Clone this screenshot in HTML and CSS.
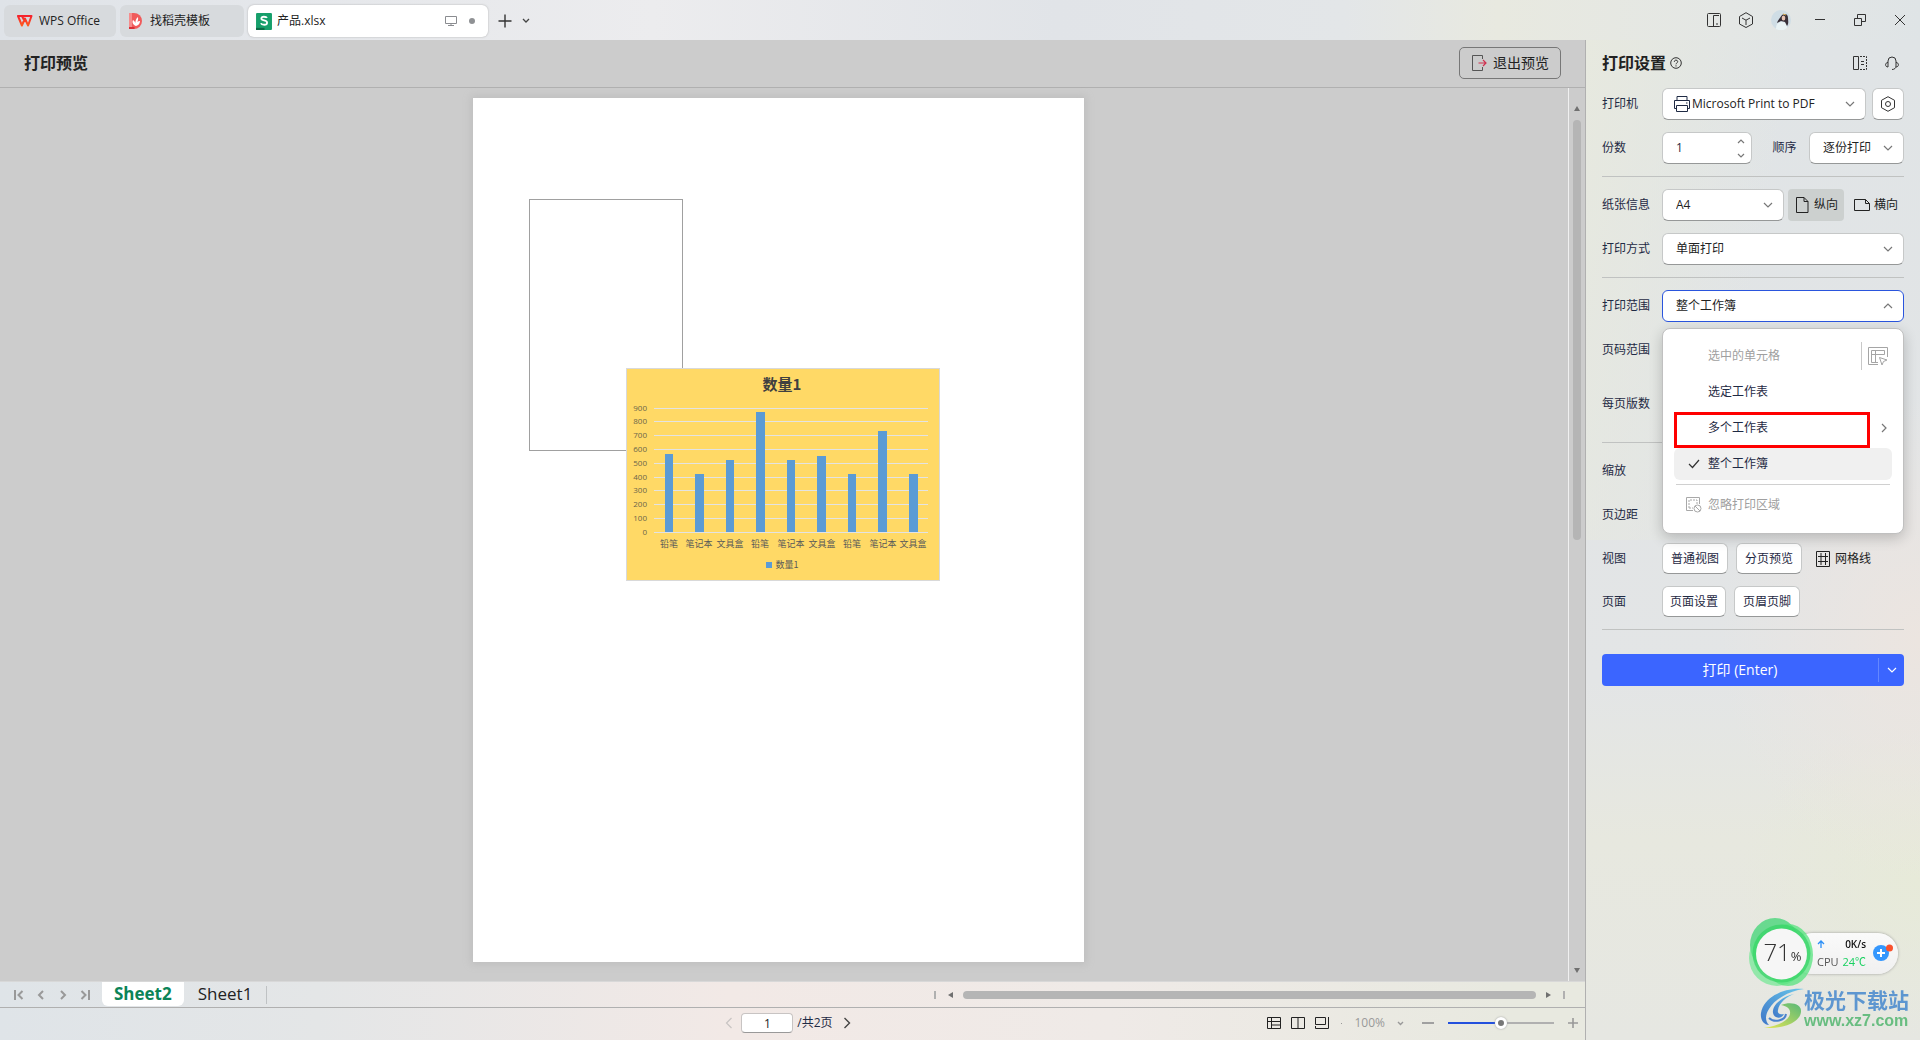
FILE: index.html
```html
<!DOCTYPE html>
<html lang="zh-CN">
<head>
<meta charset="utf-8">
<title>打印预览 - 产品.xlsx</title>
<link rel="stylesheet" href="styles.css">
</head>
<body>
<div class="app">
  <header class="titlebar">
    <nav class="tabs">
      <button class="tab tab-home">
        <svg width="16" height="14" viewBox="0 0 16 14"><defs><linearGradient id="wg" x1="0" y1="0" x2="0" y2="1"><stop offset="0" stop-color="#f5222d"/><stop offset="1" stop-color="#ff5a1f"/></linearGradient></defs><path d="M1 2h13.500l-3.400 9.500L7.900 4.500l-3 7L1 2h4l3 6" fill="none" stroke="url(#wg)" stroke-width="2" stroke-linejoin="round"/></svg>
        <span>WPS Office</span>
      </button>
      <button class="tab tab-template">
        <svg width="14" height="16" viewBox="0 0 14 16"><path d="M0 0h5a8 8 0 0 1 0 16H0z" fill="#f05b5b"/><path d="M0 0h3v14H0z" fill="#f68d8d"/><path d="M0 14h5.500v2H0z" fill="#d92f36"/><path d="M7 13C3.500 11.500 3 9 4 7c1.500 1 2 2 2.300 3C6.500 7.500 7 5.500 9 4c.3 2 0 3.500-.7 5 1-.8 1.700-1 2.700-1 0 2.500-1.500 4.500-4 5z" fill="#fff"/></svg>
        <span>找稻壳模板</span>
      </button>
      <button class="tab tab-file">
        <svg width="16" height="17" viewBox="0 0 15 16"><rect width="15" height="16" rx="1" fill="#169f6b"/><path d="M0 14h8v2H0z" fill="#0b6b45"/><path d="M10.300 4.600C9.700 3.400 5 2.700 5 5.200c0 2.400 5.400 1.300 5.400 3.900 0 2.800-5.200 2.200-5.800.6" fill="none" stroke="#fff" stroke-width="1.700"/></svg>
        <span>产品.xlsx</span>
        <svg class="tab-screen" width="12" height="12" viewBox="0 0 12 12"><path d="M.5 1.500h11v7H.5zM6 8.500v2M3 10.500h6" fill="none" stroke="#8a8c90"/></svg>
        <i class="tab-dot"></i>
      </button>
      <button class="icon-btn" aria-label="新建"><svg width="14" height="14" viewBox="0 0 14 14"><path d="M7 .5v13M.5 7h13" stroke="#333" stroke-width="1.400"/></svg></button>
      <button class="icon-btn" aria-label="更多"><svg width="8" height="6" viewBox="0 0 8 6"><path d="M1 1l3 3 3-3" fill="none" stroke="#444" stroke-width="1.300"/></svg></button>
    </nav>
    <div class="window-tools">
      <button class="icon-btn" aria-label="侧栏"><svg width="16" height="16" viewBox="0 0 16 16" fill="none" stroke="#333"><rect x="1.500" y="1.500" width="13" height="13" rx="1"/><path d="M7.500 14.500v-11h5.500M10 12h2"/></svg></button>
      <button class="icon-btn" aria-label="应用"><svg width="16" height="16" viewBox="0 0 16 16" fill="none" stroke="#333"><path d="M8 .7l6.500 3.800v7.500L8 15.500 1.500 12V4.500zM4 6l4 2.200L12 6M8 8.200V13"/></svg></button>
      <button class="icon-btn" aria-label="用户"><svg width="20" height="20" viewBox="0 0 20 20"><circle cx="10" cy="10" r="10" fill="#cfdde5"/><path d="M5 19c0-5 2-7 6-7s5 3 5 6a10 10 0 0 1-11 1z" fill="#e9f3f5"/><path d="M11 5c3-2 6-1 6 3 0 3 1 5-1 8l-2-4-4-1-4 2c1-3 3-5 5-8z" fill="#383039"/><ellipse cx="12.500" cy="8" rx="1.800" ry="2.600" fill="#e7c3b2"/><path d="M12 4l3 1" stroke="#d9b35a"/></svg></button>
      <button class="icon-btn" aria-label="最小化"><svg width="12" height="12" viewBox="0 0 12 12"><path d="M1 5.500h10" stroke="#333"/></svg></button>
      <button class="icon-btn" aria-label="还原"><svg width="14" height="14" viewBox="0 0 14 14" fill="none" stroke="#333"><path d="M1.500 5.500h7v7h-7zM4.500 5V1.500h8v7H9"/></svg></button>
      <button class="icon-btn" aria-label="关闭"><svg width="12" height="12" viewBox="0 0 12 12"><path d="M1 1l10 10M11 1L1 11" stroke="#333"/></svg></button>
    </div>
  </header>

  <main class="workspace">
    <div class="toolbar">
      <h1>打印预览</h1>
      <button class="exit-btn">
        <svg width="16" height="16" viewBox="0 0 16 16" fill="none"><path d="M11.500 4V.5h-10v15h10V12" stroke="#555"/><path d="M7.500 8H15M12 5l3 3-3 3" stroke="#d0304f" stroke-width="1.200"/></svg>
        退出预览
      </button>
    </div>
    <div class="preview">
      <div class="canvas">
        <div class="sheet-page">
          <div class="shape-box"></div>
          <svg class="chart" width="314" height="213" viewBox="0 0 314 213" role="img" aria-label="数量1">
            <rect x=".5" y=".5" width="313" height="212" fill="#ffd966" stroke="#d9d9d9"/>
            <text class="chart-title" x="156" y="22">数量1</text>
            <path d="M28 40.500h274M28 53.500h274M28 67.500h274M28 81.500h274M28 95.500h274M28 109.500h274M28 122.500h274M28 136.500h274M28 150.500h274M28 164.500h274" stroke="#e3e3e3"/>
            <g fill="#5b9bd5"><path d="M39 86h8v78h-8zM69 106h9v58h-9zM100 92h8v72h-8zM130 44h9v120h-9zM161 92h8v72h-8zM191 88h9v76h-9zM222 106h8v58h-8zM252 63h9v101h-9zM283 106h9v58h-9z"/><rect x="140" y="194" width="6" height="6"/></g>
            <g class="axis-y"><text x="21" y="43">900</text><text x="21" y="56">800</text><text x="21" y="70">700</text><text x="21" y="84">600</text><text x="21" y="98">500</text><text x="21" y="112">400</text><text x="21" y="125">300</text><text x="21" y="139">200</text><text x="21" y="153">100</text><text x="21" y="167">0</text></g>
            <g class="axis-x"><text x="43" y="179">铅笔</text><text x="73" y="179">笔记本</text><text x="104" y="179">文具盒</text><text x="134" y="179">铅笔</text><text x="165" y="179">笔记本</text><text x="196" y="179">文具盒</text><text x="226" y="179">铅笔</text><text x="257" y="179">笔记本</text><text x="287" y="179">文具盒</text><text x="161" y="200">数量1</text></g>
          </svg>
        </div>
      </div>
      <div class="vscroll">
        <svg width="6" height="5" viewBox="0 0 6 5"><path d="M3 0l3 5H0z" fill="#707070"/></svg>
        <div class="vtrack"><i></i></div>
        <svg width="6" height="5" viewBox="0 0 6 5"><path d="M3 5l3-5H0z" fill="#707070"/></svg>
      </div>
    </div>
    <div class="sheetbar">
      <div class="sheet-nav">
        <button class="icon-btn" aria-label="第一张"><svg width="10" height="10" viewBox="0 0 10 10"><path d="M1 0v10M8.500 1l-4 4 4 4"/></svg></button>
        <button class="icon-btn" aria-label="上一张"><svg width="10" height="10" viewBox="0 0 10 10"><path d="M7 1L3 5l4 4"/></svg></button>
        <button class="icon-btn" aria-label="下一张"><svg width="10" height="10" viewBox="0 0 10 10"><path d="M3 1l4 4-4 4"/></svg></button>
        <button class="icon-btn" aria-label="最后一张"><svg width="10" height="10" viewBox="0 0 10 10"><path d="M9 0v10M1.500 1l4 4-4 4"/></svg></button>
      </div>
      <button class="sheet-tab active">Sheet2</button>
      <button class="sheet-tab">Sheet1</button>
      <i class="sheet-sep"></i>
      <div class="hscroll">
        <i class="tick"></i>
        <svg width="5" height="6" viewBox="0 0 5 6"><path d="M0 3l5-3v6z" fill="#707070"/></svg>
        <i class="hthumb"></i>
        <svg width="5" height="6" viewBox="0 0 5 6"><path d="M5 3L0 0v6z" fill="#707070"/></svg>
        <i class="tick"></i>
      </div>
    </div>
    <footer class="statusbar">
      <div class="pager">
        <button class="icon-btn" aria-label="上一页"><svg width="8" height="12" viewBox="0 0 8 12"><path d="M6.500 1l-5 5 5 5" fill="none" stroke="#c8c4c3" stroke-width="1.200"/></svg></button>
        <input type="text" value="1" aria-label="页码">
        <span>/共2页</span>
        <button class="icon-btn" aria-label="下一页"><svg width="8" height="12" viewBox="0 0 8 12"><path d="M1.500 1l5 5-5 5" fill="none" stroke="#444" stroke-width="1.400"/></svg></button>
      </div>
      <div class="view-tools">
        <button class="icon-btn" aria-label="普通"><svg width="14" height="12" viewBox="0 0 14 12" fill="none" stroke="#222"><path d="M.5.5h13v11H.5zM.5 4.500h13M4.500.5v11M4.500 8h9"/></svg></button>
        <button class="icon-btn" aria-label="分页"><svg width="14" height="12" viewBox="0 0 14 12" fill="none" stroke="#222"><path d="M.5.5h13v11H.5zM7 .5v11"/></svg></button>
        <button class="icon-btn" aria-label="布局"><svg width="14" height="12" viewBox="0 0 14 12" fill="none" stroke="#222"><path d="M.5.5h10v7H.5zM13.500 0v11.500H.5V9"/></svg></button>
        <i class="dot"></i>
        <button class="zoom-value">100% <svg width="7" height="5" viewBox="0 0 7 5"><path d="M1 1l2.500 2.500L6 1" fill="none" stroke="#999" stroke-width="1.400"/></svg></button>
        <button class="icon-btn" aria-label="缩小"><svg width="12" height="12" viewBox="0 0 12 12"><path d="M0 6h12" stroke="#a0a0a0" stroke-width="2"/></svg></button>
        <input type="range" min="0" max="100" value="50" aria-label="缩放比例">
        <button class="icon-btn" aria-label="放大"><svg width="10" height="10" viewBox="0 0 10 10"><path d="M0 5h10M5 0v10" stroke="#999" stroke-width="1.600"/></svg></button>
      </div>
    </footer>
  </main>

  <aside class="settings">
    <div class="settings-head">
      <h2>打印设置</h2>
      <svg width="12" height="12" viewBox="0 0 12 12" fill="none" stroke="#333"><circle cx="6" cy="6" r="5.300"/><path d="M4.300 4.800c0-2.300 3.400-2.200 3.400-.1C7.700 6 6 5.900 6 7.300M6 8.300v1.200"/></svg>
      <div class="head-tools">
        <button class="icon-btn" aria-label="布局"><svg width="14" height="14" viewBox="0 0 14 14" fill="none" stroke="#333"><path d="M.5.5h5v13h-5z"/><path d="M7 .5h6.500v13H7" stroke-dasharray="2 1"/><path d="M8 5.500h3M8 8.500h3"/></svg></button>
        <button class="icon-btn" aria-label="客服"><svg width="14" height="14" viewBox="0 0 14 14" fill="none" stroke="#333"><path d="M3 11V5a4 4 0 0 1 8 0v5c0 2-1.500 3.500-4 3.500M3 6.500c-3.200 0-3.200 4.500 0 4.500M11 6.500c3.200 0 3.200 4.500 0 4.500"/></svg></button>
      </div>
    </div>

    <div class="row">
      <label for="printer">打印机</label>
      <div class="select grow with-icon">
        <svg class="lead" width="16" height="16" viewBox="0 0 16 16" fill="none" stroke="#1f2a44"><path d="M3 4.500v-4h10v4M3 12.500H.5v-8h15v8H13M2.500 9.500h11v6h-11zM12 7h1.500"/></svg>
        <select id="printer"><option>Microsoft Print to PDF</option></select>
        <svg class="chev" viewBox="0 0 10 6"><path d="M1 1l4 4 4-4"/></svg>
      </div>
      <button class="box-btn square" aria-label="打印机属性"><svg width="16" height="16" viewBox="0 0 16 16" fill="none" stroke="#333"><path d="M8 .7l6.500 3.600v7.400L8 15.300 1.500 11.700V4.300z"/><circle cx="8" cy="8" r="2.500"/></svg></button>
    </div>
    <div class="row">
      <label for="copies">份数</label>
      <div class="spinner">
        <input id="copies" type="text" value="1">
        <div class="spin-btns">
          <button aria-label="增加"><svg width="8" height="5" viewBox="0 0 8 5"><path d="M1 4l3-3 3 3"/></svg></button>
          <button aria-label="减少"><svg width="8" height="5" viewBox="0 0 8 5"><path d="M1 1l3 3 3-3"/></svg></button>
        </div>
      </div>
      <label class="inline-label" for="order">顺序</label>
      <div class="select w-order">
        <select id="order"><option>逐份打印</option></select>
        <svg class="chev" viewBox="0 0 10 6"><path d="M1 1l4 4 4-4"/></svg>
      </div>
    </div>
    <hr>
    <div class="row">
      <label for="paper">纸张信息</label>
      <div class="select w-paper">
        <select id="paper"><option>A4</option></select>
        <svg class="chev" viewBox="0 0 10 6"><path d="M1 1l4 4 4-4"/></svg>
      </div>
      <div class="orient">
        <button class="flat-btn pressed"><svg width="13" height="16" viewBox="0 0 13 16" fill="none" stroke="#222"><path d="M.5.5h7.500l4 4v11H.5zM8 .5v4h4"/></svg>纵向</button>
        <button class="flat-btn"><svg width="16" height="12" viewBox="0 0 16 12" fill="none" stroke="#222"><path d="M.5.5h11l4 4v7H.5zM11.500.5v4h4"/></svg>横向</button>
      </div>
    </div>
    <div class="row">
      <label for="duplex">打印方式</label>
      <div class="select grow">
        <select id="duplex"><option>单面打印</option></select>
        <svg class="chev" viewBox="0 0 10 6"><path d="M1 1l4 4 4-4"/></svg>
      </div>
    </div>
    <hr>
    <div class="row">
      <label for="range">打印范围</label>
      <div class="select grow open">
        <select id="range"><option>整个工作簿</option></select>
        <svg class="chev" viewBox="0 0 10 6"><path d="M1 5l4-4 4 4"/></svg>
        <div class="menu">
          <div class="menu-row">
            <button class="menu-item muted" disabled><span>选中的单元格</span></button>
            <button class="menu-side" aria-label="选择区域" disabled><svg width="20" height="19" viewBox="0 0 20 19" fill="none" stroke="#a5a5a5"><path d="M10 17.500H.5V.5h19V10M3.500 3.500h13v4h-13zM7.500 3.500v12M10 15.500H3.500V7M11.500 10.500l7.500 2.500-3.500 1.500-1.500 3.500z"/></svg></button>
          </div>
          <button class="menu-item"><span>选定工作表</span></button>
          <button class="menu-item"><span>多个工作表</span><svg class="sub" width="6" height="10" viewBox="0 0 6 10"><path d="M1 1l4 4-4 4"/></svg></button>
          <button class="menu-item selected"><svg class="mark" width="12" height="10" viewBox="0 0 12 10"><path d="M1 5l3.500 3.500L11 1" fill="none" stroke="#333" stroke-width="1.200"/></svg><span>整个工作簿</span></button>
          <i class="menu-sep"></i>
          <button class="menu-item muted" disabled><svg class="mark" width="16" height="16" viewBox="0 0 16 16" fill="none" stroke="#a8a8a8"><path d="M7 13.500H.5V.5h13V7"/><path d="M3 11V3h8v4M3 11h4" stroke-dasharray="2 1"/><circle cx="11.500" cy="11.500" r="3.500"/><path d="M9 9l5 5"/></svg><span>忽略打印区域</span></button>
          <div class="callout"></div>
        </div>
      </div>
    </div>
    <div class="row">
      <label for="pages">页码范围</label>
      <div class="select grow"><select id="pages"></select></div>
    </div>
    <div class="row tall">
      <label for="persheet">每页版数</label>
      <div class="select grow"><select id="persheet"></select></div>
    </div>
    <hr>
    <div class="row">
      <label for="scale">缩放</label>
      <div class="select grow"><select id="scale"></select></div>
    </div>
    <div class="row">
      <label for="margin">页边距</label>
      <div class="select grow"><select id="margin"></select></div>
    </div>
    <div class="row compact">
      <span class="row-label">视图</span>
      <div class="btns">
        <button class="box-btn">普通视图</button>
        <button class="box-btn">分页预览</button>
        <button class="flat-btn"><svg width="14" height="16" viewBox="0 0 14 16" fill="none" stroke="#222"><path d="M.5.5h13v15H.5zM5 2v12M9.500 2v12M2 5.500h10M2 10.500h10"/></svg>网格线</button>
      </div>
    </div>
    <div class="row compact">
      <span class="row-label">页面</span>
      <div class="btns">
        <button class="box-btn snug">页面设置</button>
        <button class="box-btn">页眉页脚</button>
      </div>
    </div>
    <hr>
    <div class="print">
      <button class="print-main">打印 (Enter)</button>
      <button class="print-more" aria-label="更多打印选项"><svg width="10" height="6" viewBox="0 0 10 6"><path d="M1 1l4 4 4-4" fill="none" stroke="#fff" stroke-width="1.200"/></svg></button>
    </div>
  </aside>
</div>

<div class="monitor">
  <svg class="ring" width="66" height="70" viewBox="0 0 66 70">
    <ellipse cx="27" cy="28" rx="25" ry="27" fill="#3fd474" fill-opacity=".75"/>
    <circle cx="29" cy="41" r="28" fill="#5be886" fill-opacity=".6"/>
    <ellipse cx="40" cy="38" rx="25" ry="31" fill="#55e37d" fill-opacity=".75"/>
    <circle cx="33.500" cy="36.500" r="29" fill="#35d365" fill-opacity=".7"/>
    <circle cx="33.500" cy="37" r="25.500" fill="#f6f6f6"/>
  </svg>
  <div class="percent">71<small>%</small></div>
  <div class="pill">
    <div class="stat"><svg width="8" height="8" viewBox="0 0 8 8"><path d="M4 8V1M1 4l3-3 3 3" fill="none" stroke="#2b8ff7" stroke-width="1.300"/></svg><b>0K/s</b></div>
    <div class="stat"><span>CPU</span><em>24℃</em></div>
    <svg class="plus" width="21" height="17" viewBox="0 0 21 17"><circle cx="8" cy="9" r="8" fill="#3497fd"/><path d="M4 9h8M8 5v8" stroke="#fff" stroke-width="2"/><circle cx="16.500" cy="4" r="3.500" fill="#f9522d"/></svg>
  </div>
</div>

<div class="watermark">
  <svg width="44" height="42" viewBox="0 0 44 42">
    <defs><linearGradient id="sw1" x1="0" y1="1" x2="1" y2="0"><stop offset="0" stop-color="#3f77c8"/><stop offset="1" stop-color="#68c6ea"/></linearGradient><linearGradient id="sw2" x1="0" y1="1" x2="1" y2="0"><stop offset="0" stop-color="#e6e655"/><stop offset="1" stop-color="#58b877"/></linearGradient></defs>
    <path d="M44 1C26-1 4 8 1 25c-1 7 3 12 8 12-4-4-4-10 0-16C14 12 28 3 44 1z" fill="url(#sw1)"/>
    <path d="M34 6c-10 2-22 10-21 19 1 6 9 6 11 1-3 1-7 0-6-4 1-7 8-13 16-16z" fill="url(#sw1)"/>
    <path d="M21 17c10-4 21-1 20 7-1 9-14 17-37 16 15-2 25-8 26-14 1-5-3-8-9-9z" fill="url(#sw2)"/>
    <path d="M9 30c5 5 16 3 17-4" fill="none" stroke="#4a82cd" stroke-width="2"/>
  </svg>
  <div><strong>极光下载站</strong><span>www.xz7.com</span></div>
</div>
</body>
</html>
```
FILE: styles.css
```css
* { box-sizing: border-box; }
body {
  margin: 0;
  font: 12px/16px "Open Sans", "Noto Sans CJK SC", sans-serif;
  color: #222;
}
button, input, select { font: inherit; color: inherit; margin: 0; }
button { border: 0; background: none; padding: 0; cursor: pointer; white-space: nowrap; }
svg { flex: none; display: block; }
h1, h2 { margin: 0; }
i { display: block; }
.icon-btn { display: flex; align-items: center; justify-content: center; flex: none; }

.app {
  min-height: 100vh;
  display: grid;
  grid-template: 40px 1fr / minmax(0, 1fr) 334px;
}

/* Title bar */
.titlebar {
  grid-column: 1 / -1;
  display: flex;
  align-items: center;
  justify-content: space-between;
  padding-left: 4px;
  background: linear-gradient(90deg, #dfe3e8 0%, #ececee 34%, #e1e4e8 55%, #e3e6e8 70%, #e8e9e0 78%, #e4e7e5 90%, #dfe4e6 100%);
}
.tabs { display: flex; align-items: center; gap: 4px; padding-top: 2px; }
.tab {
  height: 32px;
  display: flex;
  align-items: center;
  gap: 7px;
  border-radius: 6px;
  background: #d7dadd;
}
.tab-home { width: 112px; padding-left: 13px; gap: 6px; }
.tab-template { width: 124px; padding-left: 9px; }
.tab-file { width: 240px; padding: 0 13px 0 8px; gap: 5px; background: #fff; box-shadow: 0 0 2px #aaa; }
.tab-screen { margin-left: auto; }
.tab-dot { width: 6px; height: 6px; margin-left: 7px; border-radius: 50%; background: #8f9194; }
.tabs .icon-btn { margin-left: 6px; }
.window-tools { display: flex; align-items: center; }
.window-tools .icon-btn { width: 32px; height: 32px; }
.window-tools .icon-btn:nth-child(3) { width: 38px; }
.window-tools .icon-btn:nth-child(n+4) { width: 40px; }

/* Workspace */
.workspace {
  display: flex;
  flex-direction: column;
  background: #ccc;
  border-right: 1px solid #b0b0b0;
}
.toolbar {
  height: 48px;
  display: flex;
  align-items: center;
  justify-content: space-between;
  padding: 0 24px 2px;
  border-bottom: 1px solid #b0b0b0;
}
.toolbar h1 { font-size: 16px; line-height: 20px; font-weight: 600; }
.exit-btn {
  height: 32px;
  display: flex;
  align-items: center;
  gap: 6px;
  padding: 0 11px;
  border: 1px solid #777;
  border-radius: 5px;
  font-size: 14px;
}
.preview { flex: 1; display: flex; }
.canvas { flex: 1; padding: 10px 0; display: flex; justify-content: center; align-items: flex-start; }
.sheet-page {
  position: relative;
  width: 611px;
  height: 864px;
  margin-left: -12px;
  background: #fff;
  box-shadow: 0 0 8px 2px #bdbdbd;
}
.shape-box { position: absolute; left: 56px; top: 101px; width: 154px; height: 252px; border: 1px solid #a0a0a0; }
.chart { position: absolute; left: 153px; top: 270px; }
.chart text { font-family: "Noto Sans CJK SC", sans-serif; font-size: 9px; fill: #595959; text-anchor: middle; }
.chart .chart-title { font-size: 15px; font-weight: bold; fill: #404040; }
.chart .axis-y text { font-family: "Open Sans", sans-serif; font-size: 8px; text-anchor: end; fill: #6b654b; }
.vscroll {
  width: 17px;
  display: flex;
  flex-direction: column;
  align-items: center;
  padding: 18px 0 8px;
  gap: 9px;
  border-left: 1px solid #f0f0f0;
}
.vtrack { flex: 1; width: 8px; }
.vtrack i { height: 50%; border-radius: 4px; background: #b5b5b5; }

.sheetbar {
  height: 27px;
  display: flex;
  align-items: center;
  padding: 0 20px 0 14px;
  border-top: 1px solid #d8d8d8;
  border-bottom: 1px solid #b0b0b0;
}
.sheetbar, .statusbar { background: linear-gradient(90deg, #dfe4e8 0%, #e4e6e7 20%, #f2e9e6 46%, #efeae7 70%, #e8e9e0 95%); }
.sheet-nav { display: flex; gap: 12px; margin-right: 12px; }
.sheet-nav path { fill: none; stroke: #999; stroke-width: 2; }
.sheet-tab { align-self: stretch; height: 24px; padding: 0 14px; font-size: 17px; line-height: 22px; border-radius: 0 0 6px 6px; }
.sheet-tab.active { background: #fff; color: #0b8457; font-weight: bold; padding: 0 12px; }
.sheet-sep { width: 1px; height: 18px; background: #bfc2c4; }
.hscroll { display: flex; align-items: center; gap: 12px; flex: 1; max-width: 631px; margin-left: auto; }
.tick { width: 2px; height: 8px; background: #b0b0b0; }
.hthumb { flex: 1; height: 8px; margin: 0 -2px; border-radius: 4px; background: #b5b5b5; }

.statusbar {
  height: 32px;
  display: grid;
  grid-template-columns: 1fr auto 1fr;
  align-items: center;
  padding: 0 7px 2px 0;
}
.pager { grid-column: 2; display: flex; align-items: center; gap: 4px; }
.pager .icon-btn { width: 20px; }
.pager .icon-btn:first-child { width: 16px; }
.pager span { color: #1f2a44; }
.pager input {
  width: 52px;
  height: 20px;
  border: 1px solid #c8c4c3;
  border-bottom-color: #999;
  border-radius: 4px;
  text-align: center;
  background: #fff;
}
.view-tools { justify-self: end; display: flex; align-items: center; gap: 10px; }
.dot { width: 1px; height: 1px; background: #999; margin: 0 2px; }
.zoom-value { display: flex; align-items: center; gap: 12px; color: #999; margin-right: 8px; }
input[type="range"] {
  appearance: none;
  width: 106px;
  height: 12px;
  margin: 0 4px;
  background: linear-gradient(90deg, #2350dd 50%, #b0b0b0 50%) center / 100% 2px no-repeat;
}
input[type="range"]::-webkit-slider-thumb {
  appearance: none;
  width: 12px;
  height: 12px;
  border-radius: 50%;
  border: 3px solid #fff;
  background: #777;
  box-shadow: 0 0 2px #999;
}

/* Print settings */
.settings {
  padding: 0 16px;
  color: #1f2a44;
  background:
    radial-gradient(ellipse 200px 240px at 100% 60%, #ece5e0, transparent),
    radial-gradient(ellipse 180px 160px at 100% 84%, #e7ead9, transparent),
    linear-gradient(100deg, #e7e9df 0%, transparent 50%) top / 100% 50% no-repeat,
    linear-gradient(180deg, #e0e4e6 0%, #e3e5e6 64%, #e7e8df 80%, #e6e7e2 100%);
}
.settings-head { height: 48px; display: flex; align-items: center; gap: 4px; padding-bottom: 2px; color: #222; }
.settings-head h2 { font-size: 16px; line-height: 20px; }
.head-tools { margin-left: auto; display: flex; gap: 18px; padding-right: 5px; }
.row { min-height: 32px; display: flex; align-items: center; margin-bottom: 12px; }
.row.tall { min-height: 52px; }
.row.compact { min-height: 31px; }
.row > label:first-child, .row-label { width: 60px; flex: none; }
.settings hr { border: 0; height: 1px; margin: 0 0 12px; background: #c0c2c1; }
.select {
  position: relative;
  display: grid;
  grid-template-columns: minmax(0, 1fr);
  align-items: center;
}
.select > * { grid-area: 1 / 1; }
.select select, .spinner, .box-btn {
  height: 32px;
  border: 1px solid #c6c8c8;
  border-bottom-color: #969898;
  border-radius: 6px;
  background: #fff;
}
.select select { appearance: none; width: 100%; padding: 0 24px 0 13px; color: #222; }
.select.open select { border-color: #2a55dd; outline: 0; }
.select.with-icon select { padding-left: 29px; }
.lead { z-index: 1; margin-left: 12px; pointer-events: none; }
.chev { z-index: 1; width: 10px; height: 6px; justify-self: end; margin-right: 11px; pointer-events: none; }
.chev path, .spin-btns path, .sub path { fill: none; stroke: #777; stroke-width: 1.2; }
.grow { flex: 1; }
.square { width: 32px; margin-left: 6px; display: flex; align-items: center; justify-content: center; }
.spinner { width: 90px; display: flex; }
.spinner input { width: 60px; border: 0; background: none; padding: 0 0 0 13px; outline: 0; }
.spin-btns { margin-left: auto; width: 20px; padding: 6px 0 5px; display: flex; flex-direction: column; align-items: center; justify-content: space-between; }
.inline-label { flex: 1; padding-left: 8px; text-align: center; }
.w-order { width: 95px; }
.w-paper { width: 122px; }
.orient { flex: 1; display: flex; justify-content: space-between; padding-left: 4px; }
.flat-btn { height: 32px; display: flex; align-items: center; gap: 5px; padding: 0 6px; border-radius: 4px; color: #222; }
.orient .flat-btn { padding: 0 6px 0 8px; }
.orient .flat-btn:last-child { gap: 4px; }
.pressed { background: #ccd0cf; }
.btns { display: flex; gap: 8px; }
.btns button { height: 31px; }
.btns .box-btn { padding: 0 8px; }
.btns .snug { padding: 0 7px; }

.menu {
  position: absolute;
  z-index: 2;
  top: 38px;
  left: 0;
  right: 0;
  height: 206px;
  padding: 11px;
  display: flex;
  flex-direction: column;
  gap: 4px;
  border: 1px solid #c0c0c0;
  border-radius: 8px;
  background: #fff;
  box-shadow: 0 4px 14px #0003;
}
.menu-row { display: flex; align-items: center; }
.menu-item {
  width: 100%;
  height: 32px;
  flex: none;
  display: grid;
  grid-template-columns: 34px 1fr 11px;
  align-items: center;
  border-radius: 6px;
  text-align: left;
}
.menu-row .menu-item { flex: 1; }
.menu-item span { grid-column: 2; }
.menu-item.muted { color: #a0a0a0; }
.menu-item.selected { background: #f0f0f0; }
.mark { grid-column: 1; justify-self: center; margin-left: 6px; }
.menu-side { height: 28px; padding-left: 6px; border-left: 1px solid #c8c8c8; margin-right: 4px; }
.menu-sep { height: 1px; flex: none; margin: 0 2px; background: #d0d0d0; }
.callout { position: absolute; left: 11px; right: 33px; top: 83px; height: 36px; border: 3px solid #f00; pointer-events: none; }

.print { height: 32px; display: flex; align-items: center; margin-top: 24px; border-radius: 4px; background: #3b65ff; color: #fff; }
.print-main { flex: 1; height: 32px; font-size: 14px; }
.print-more { width: 26px; height: 24px; display: flex; align-items: center; justify-content: center; border-left: 1px solid #6487ff; }

/* Floating system monitor */
.monitor { position: fixed; right: 22px; bottom: 53px; width: 150px; height: 70px; }
.ring { position: absolute; left: 0; top: 0; }
.percent {
  position: absolute;
  left: 9px;
  top: 12px;
  width: 51px;
  line-height: 46px;
  text-align: center;
  font-size: 24px;
  font-weight: 300;
  color: #333;
}
.percent small { font-size: 13px; font-weight: normal; }
.pill {
  position: absolute;
  left: 44px;
  right: 0;
  top: 16px;
  height: 41px;
  padding: 2px 32px 2px 25px;
  border-radius: 21px;
  background: linear-gradient(#fafafa, #f0f0f0);
  box-shadow: 0 0 3px #999;
}
.ring, .percent { z-index: 1; }
.stat { display: flex; justify-content: space-between; align-items: center; height: 18px; font: 11px/18px "Open Sans", "Noto Sans CJK SC", sans-serif; color: #555; }
.stat b { font-size: 10px; font-weight: 600; color: #111; }
.stat em { font-style: normal; color: #18d160; }
.plus { position: absolute; right: 4px; top: 11px; }

.watermark { position: fixed; right: 11px; bottom: 9px; display: flex; align-items: center; }
.watermark strong, .watermark span { display: block; white-space: nowrap; }
.watermark strong { font: bold 21px/24px "Noto Sans CJK SC", sans-serif; color: #5d96d0; }
.watermark span { font: bold 16px/20px "Liberation Sans", sans-serif; color: #68bd80; }
```
